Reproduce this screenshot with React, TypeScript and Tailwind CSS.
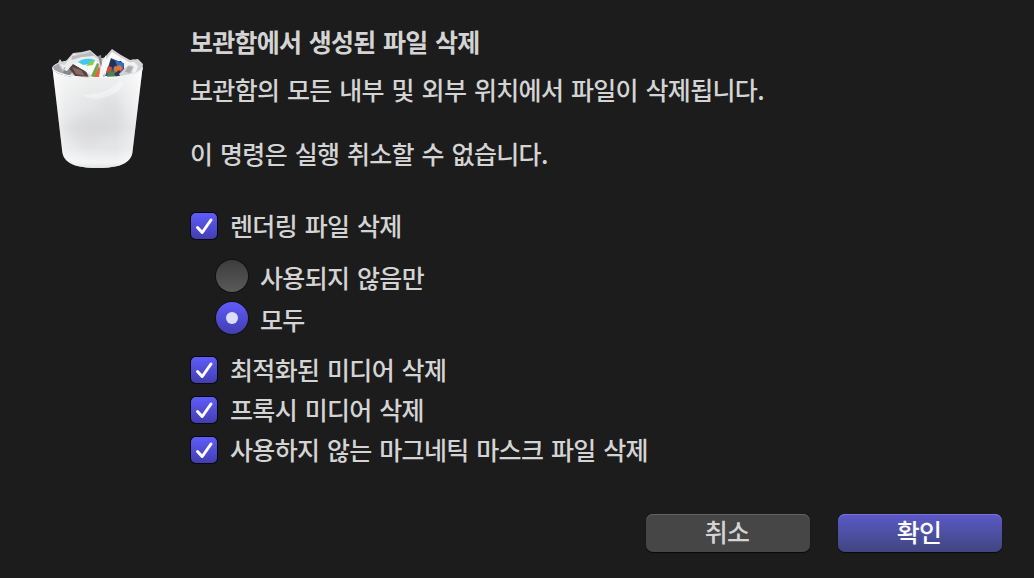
import React from 'react';

interface RowProps {
   label: string;
   selected?: boolean;
}

const TrashIcon: React.FC = () => (
   <svg width="96" height="124" viewBox="0 0 96 124" className="block">
      <defs>
         <linearGradient id="bin" x1="0" x2="1" y1="0" y2="0">
            <stop offset="0" stopColor="#f8f8f9" />
            <stop offset="0.14" stopColor="#e9eaeb" />
            <stop offset="0.4" stopColor="#e0e1e2" />
            <stop offset="0.7" stopColor="#dfe0e2" />
            <stop offset="0.9" stopColor="#ececee" />
            <stop offset="1" stopColor="#f9f9fa" />
         </linearGradient>
         <linearGradient id="binShade" x1="0" x2="0" y1="0" y2="1">
            <stop offset="0" stopColor="#fff" stopOpacity="0.6" />
            <stop offset="0.3" stopColor="#fff" stopOpacity="0.2" />
            <stop offset="0.6" stopColor="#d8d8da" stopOpacity="0.25" />
            <stop offset="0.8" stopColor="#fff" stopOpacity="0.15" />
            <stop offset="0.94" stopColor="#fff" stopOpacity="0.65" />
            <stop offset="1" stopColor="#dfe0e2" />
         </linearGradient>
         <filter id="soft" x="-50%" y="-50%" width="200%" height="200%">
            <feGaussianBlur stdDeviation="5" />
         </filter>
      </defs>
      {/* Inside of the bin */}
      <ellipse cx="47.5" cy="22" rx="45" ry="9.5" fill="#a3a5a8" stroke="#e4e5e6" strokeWidth="1" />
      {/* Crumpled paper */}
      <path d="M8 17l2-4 2 3 4-1 7-8 9-1 8-2 7 6 4 3 4-2 7-8 9 6 9 5 8-1 5 5-1 7-7 6-20 3H28L14 27z" fill="#d3d4d5" />
      <path d="M10 18l5 1 6-8 3-3 4 1-6 5-9 9z" fill="#eeeeef" />
      <path d="M22 10l12-2 7-2 3 4-10 2-13 3z" fill="#b9bbbd" />
      <path d="M14 22l9-5 8-1-5 6-7 8-6-3z" fill="#85878a" />
      <path d="M18 21l6-4 12 8 3 7-14-2z" fill="#4d4444" />
      <path d="M22 21l9 3 4 6-9-2z" fill="#8d6661" />
      <path d="M18 15l14-4 12-1 6 5-12 3-15 0-6 7-3-1z" fill="#eceded" />
      <path d="M23 18l15-3 11 1-6 15-8-6z" fill="#fafafa" />
      <path d="M28 16c5-4 12-4 17-2l-5 4-7 1z" fill="#40c8f0" />
      <path d="M40 16l5-2-2 5-7 1z" fill="#8bd13d" />
      <path d="M41 30l6-13 2 1-4 14z" fill="#74a44c" />
      <path d="M44 32l5-12 1 3-1 9z" fill="#e7623f" />
      <path d="M49 32l3-16 4-7 1 16-4 7z" fill="#f4f4f4" />
      <path d="M48 10l3-1 1 8-1 4zM57 16l-2 8-2 7 5-2z" fill="#8c8e91" />
      <path d="M53 18l9-12 18 11-7 16H55z" fill="#fbfbfb" />
      <path d="M61 12l16 7-6 12-16-1z" fill="#34558f" />
      <path d="M61 13l5 2 5 0 4 5-4 3-6-4-3 4-3-2z" fill="#23304f" />
      <path d="M65 14l6 2 4 2-3 5-6 1 1-4z" fill="#2f6ccb" />
      <path d="M64 21l6-2 3 3-4 5-5 0z" fill="#df7533" />
      <path d="M58 20l4 1-1 6h-5z" fill="#cd5233" />
      <path d="M58 26l7-1 3 3-3 3h-8z" fill="#4f8052" />
      <path d="M64 28l5-4 2 2-4 5z" fill="#3b2e53" />
      <path d="M69 28l5-5 9-10 6 6-4 9-14 3z" fill="#d1d2d3" />
      <path d="M74 17l10-1 4 4-2 6-4 1 2-7-5-1-5 4z" fill="#f2f2f3" />
      <path d="M78 20l5 1-3 6-5-1z" fill="#a9abad" />
      {/* Body */}
      <path d="M2.6 23C6 29.500 24 32 48 32S89 29.500 92.400 23L82.500 106C81 117.500 69 122 47.500 122S14 117.500 12.300 106z" fill="url(#bin)" />
      <path d="M2.6 23C6 29.500 24 32 48 32S89 29.500 92.400 23L82.500 106C81 117.500 69 122 47.500 122S14 117.500 12.300 106z" fill="url(#binShade)" />
      <path d="M34 49c16-1 27-5 36-14 6 3 1 10-9 14-10 5-22 5-27 0z" fill="#fff" opacity="0.4" />
      <ellipse cx="37" cy="84" rx="18" ry="16" fill="#cfcecf" opacity="0.3" filter="url(#soft)" />
      <ellipse cx="60" cy="70" rx="13" ry="20" fill="#d2d2d4" opacity="0.3" filter="url(#soft)" />
      <path d="M2.6 22.500C7 29 25 31.500 48 31.500s40-2.500 44.400-9" fill="none" stroke="#fafafa" strokeWidth="1.2" />
   </svg>
);

const CheckRow: React.FC<RowProps> = ({ label }) => (
   <label className="flex h-10 items-center gap-[13px]">
      <span className="flex h-[26px] w-[26px] items-center justify-center rounded-[5px] bg-linear-to-b from-[#605cfb] to-[#423eb0] shadow-[0_0_0_1px_#07070d]">
         <svg width="26" height="26" viewBox="0 0 26 26" fill="none" stroke="#fff" strokeWidth="3" strokeLinecap="round" strokeLinejoin="round">
            <path d="M6.5 14.5l4.7 5L20 7" />
         </svg>
      </span>
      <span className="pb-0.5">{label}</span>
   </label>
);

const RadioRow: React.FC<RowProps> = ({ label, selected }) => (
   <label className="flex h-[42px] items-center gap-3">
      <span
         className={`flex h-8 w-8 items-center justify-center rounded-full shadow-[0_0_0_1px_#111111] ${
            selected ? 'bg-linear-to-b from-[#605cfb] to-[#423eb0]' : 'bg-linear-to-b from-[#3d3d3d] to-[#5a5a5a]'
         }`}
      >
         {selected && <span className="h-3 w-3 rounded-full bg-[#dddcf7]" />}
      </span>
      <span className="pt-0.5">{label}</span>
   </label>
);

export default function App() {
   return (
      <div className="flex h-[578px] w-[1034px] flex-col bg-[#1c1c1c] font-['Noto_Sans_CJK_KR','Noto_Sans',sans-serif] text-[25px] leading-8 font-medium tracking-[-0.67px] text-[#d4d4d4] [word-spacing:2.7px]">
         <div className="flex flex-1 pl-[50px]">
            <div className="w-[140px] pt-[46px]">
               <TrashIcon />
            </div>
            <div className="pt-[25px]">
               <h1 className="font-bold tracking-[-0.77px]">보관함에서 생성된 파일 삭제</h1>
               <p className="mt-4">보관함의 모든 내부 및 외부 위치에서 파일이 삭제됩니다.</p>
               <p className="mt-8">이 명령은 실행 취소할 수 없습니다.</p>
               <div className="mt-[37px] pl-px">
                  <CheckRow label="렌더링 파일 삭제" />
                  <div className="mt-[9px] mb-[11px] pl-[25px]">
                     <RadioRow label="사용되지 않음만" />
                     <RadioRow label="모두" selected />
                  </div>
                  <CheckRow label="최적화된 미디어 삭제" />
                  <CheckRow label="프록시 미디어 삭제" />
                  <CheckRow label="사용하지 않는 마그네틱 마스크 파일 삭제" />
               </div>
            </div>
         </div>
         <div className="flex justify-end gap-7 pr-8 pb-[26px]">
            <button className="h-[38px] w-[164px] rounded-[7px] bg-[#464646] pr-0.5 pb-1 shadow-[inset_0_1px_0_#626262,0_1px_1px_#080808]">취소</button>
            <button className="h-[38px] w-[164px] rounded-[7px] bg-linear-to-b from-[#5c59c8] to-[#40457f] pr-0.5 pb-1 text-white shadow-[inset_0_1px_0_#7674e0,0_1px_1px_#080808]">확인</button>
         </div>
      </div>
   );
}
